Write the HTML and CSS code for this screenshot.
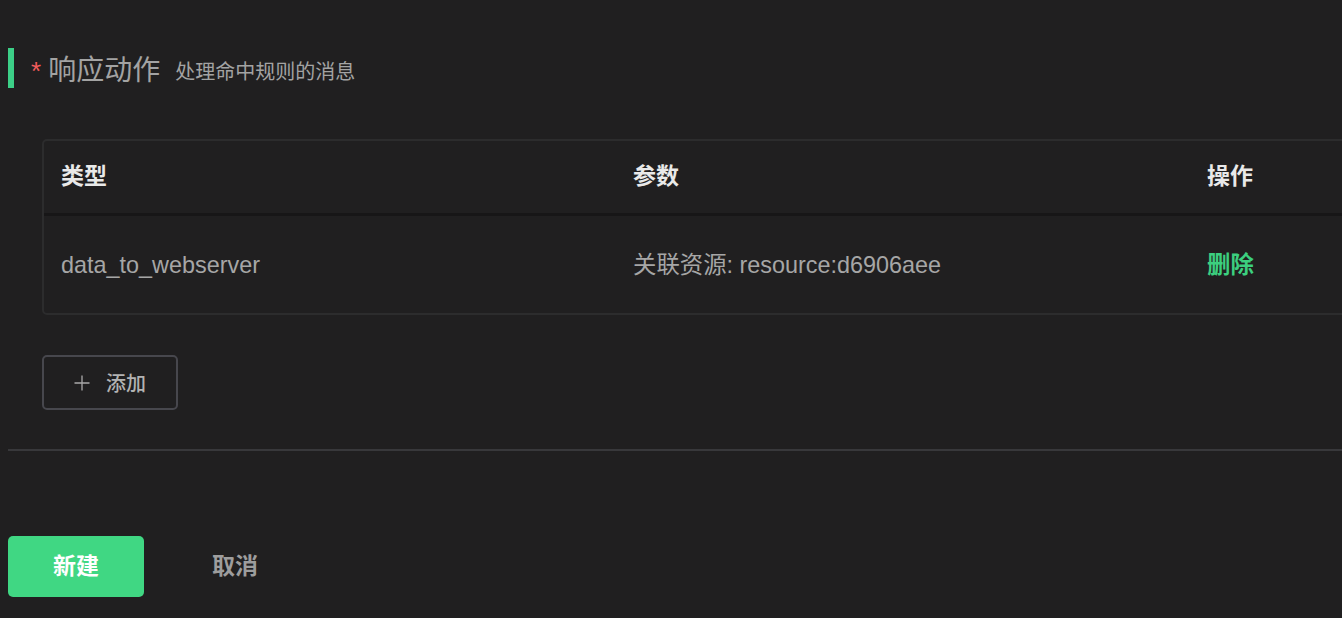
FILE: index.html
```html
<!DOCTYPE html>
<html lang="zh-CN">
<head>
<meta charset="utf-8">
<title>响应动作</title>
<link rel="stylesheet" href="styles.css">
</head>
<body>
<div class="page">
  <div class="section-title">
    <span class="required">*</span>
    <span class="title">响应动作</span>
    <span class="subtitle">处理命中规则的消息</span>
  </div>

  <div class="table-wrap">
    <div class="table">
      <div class="row head">
        <div class="cell c1">类型</div>
        <div class="cell c2">参数</div>
        <div class="cell c3">操作</div>
      </div>
      <div class="row body">
        <div class="cell c1">data_to_webserver</div>
        <div class="cell c2">关联资源: resource:d6906aee</div>
        <div class="cell c3"><span class="link">删除</span></div>
      </div>
    </div>
  </div>

  <button class="add-btn" type="button">
    <svg class="plus" width="18" height="18" viewBox="0 0 18 18"><path d="M9 1.5V16.5M1.5 9H16.5" stroke="#a9a9a9" stroke-width="1.3" fill="none"/></svg>
    <span>添加</span>
  </button>

  <div class="divider"></div>

  <div class="actions">
    <button class="btn-primary" type="button">新建</button>
    <button class="btn-text" type="button">取消</button>
  </div>
</div>
</body>
</html>
```

FILE: styles.css
```css
html, body {
  margin: 0;
  padding: 0;
  background: #201f20;
  overflow: hidden;
  font-family: "Liberation Sans", "Noto Sans CJK SC", sans-serif;
}

.page {
  padding-left: 8px;
  padding-top: 48px;
  overflow: hidden;
}

.section-title {
  display: flex;
  align-items: center;
  height: 40px;
  border-left: 6px solid #3ccf87;
  padding-left: 17px;
  box-sizing: border-box;
}

.required {
  color: #f25c5c;
  font-size: 26px;
  margin-right: 7px;
  position: relative;
  top: 3px;
}

.title {
  color: #a3a3a3;
  font-size: 28px;
  margin-right: 15px;
}

.subtitle {
  color: #a3a3a3;
  font-size: 20px;
  position: relative;
  top: 2px;
}

.table-wrap {
  margin-top: 51px;
  margin-left: 34px;
  overflow: hidden;
}

.table {
  width: 1500px;
  border: 2px solid #2c2c2d;
  border-radius: 5px;
  box-sizing: border-box;
}

.row {
  display: flex;
  align-items: center;
}

.row.head {
  height: 75px;
  padding-bottom: 3px;
  box-sizing: border-box;
  border-bottom: 3px solid #171617;
  color: #e9e9e9;
  font-weight: bold;
  font-size: 23px;
}

.row.body {
  height: 97px;
  color: #a6a6a6;
  font-size: 23.4px;
}

.cell {
  padding-left: 17px;
  box-sizing: border-box;
  line-height: 28px;
}

.c1 { width: 572px; }
.c2 { width: 574px; }
.c3 { flex: 1; }

.link {
  color: #3ccf7f;
  font-weight: bold;
}

.add-btn {
  margin-top: 40px;
  margin-left: 34px;
  width: 136px;
  height: 55px;
  border: 2px solid #47474d;
  border-radius: 5px;
  background: transparent;
  display: flex;
  align-items: center;
  padding: 0 0 0 29px;
  box-sizing: border-box;
  color: #b2b2b2;
  font-family: inherit;
  font-size: 20px;
  font-weight: 500;
  gap: 15px;
}

.plus {
  display: block;
}

.divider {
  margin-top: 39px;
  height: 2px;
  background: #38383b;
}

.actions {
  margin-top: 85px;
  display: flex;
  align-items: center;
}

.btn-primary {
  width: 136px;
  height: 61px;
  border: none;
  border-radius: 5px;
  background: #40d783;
  color: #ffffff;
  font-family: inherit;
  font-size: 23px;
  font-weight: bold;
  padding: 0 0 5px;
}

.btn-text {
  margin-left: 46px;
  width: 110px;
  height: 61px;
  border: none;
  background: transparent;
  color: #9d9d9d;
  font-family: inherit;
  font-size: 23px;
  font-weight: bold;
  padding: 0 0 5px 22px;
  text-align: left;
}
```
